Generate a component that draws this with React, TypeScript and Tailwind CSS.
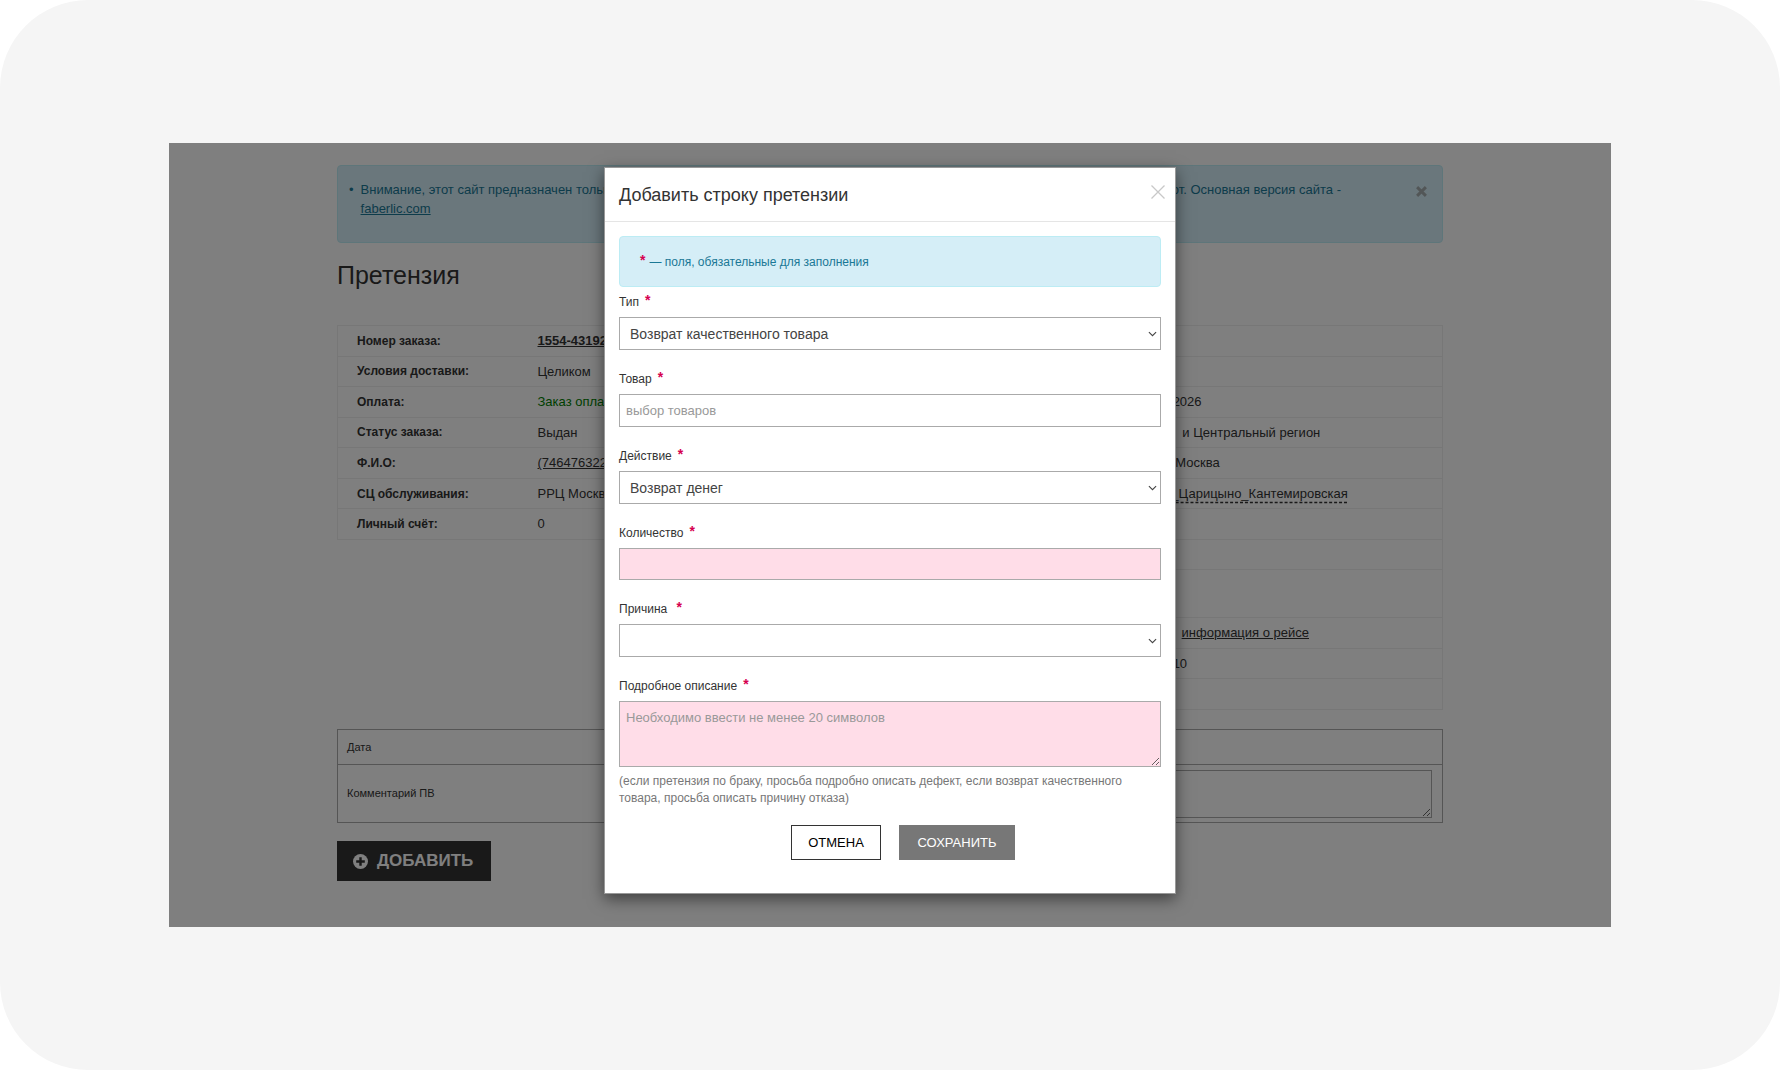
import React, { useState } from 'react';

interface InfoRow {
  label: string;
  value: React.ReactNode;
  tall?: boolean;
}

const ORDER_INFO: InfoRow[] = [
  { label: 'Номер заказа:', value: <a href="#order" className="font-bold underline">1554-43192</a> },
  { label: 'Условия доставки:', value: 'Целиком' },
  { label: 'Оплата:', value: <span className="text-[#008000]">Заказ оплачен</span> },
  { label: 'Статус заказа:', value: 'Выдан' },
  { label: 'Ф.И.О:', value: <a href="#client" className="underline">(746476322)</a> },
  { label: 'СЦ обслуживания:', value: 'РРЦ Москва' },
  { label: 'Личный счёт:', value: '0' },
];

const DELIVERY_INFO: InfoRow[] = [
  { label: '', value: '' },
  { label: '', value: '' },
  { label: '', value: '18.01.2026' },
  {
    label: '',
    value: (
      <span className="flex gap-2">
        <span>Север</span>
        <span>и Центральный регион</span>
      </span>
    ),
  },
  { label: '', value: 'Город Москва' },
  {
    label: '',
    value: (
      <a href="#point" className="underline decoration-dashed underline-offset-4">
        Пункт_Царицыно_Кантемировская
      </a>
    ),
  },
  { label: '', value: '' },
  { label: '', value: '' },
  { label: '', value: '', tall: true },
  {
    label: '',
    value: (
      <span className="flex gap-4">
        <span>Рейс</span>
        <a href="#trip" className="underline">информация о рейсе</a>
      </span>
    ),
  },
  { label: '', value: '18:00:10' },
  { label: '', value: '' },
];

const InfoTable: React.FC<{ rows: InfoRow[]; className: string }> = ({ rows, className }) => (
  <table className={`border-collapse border border-[#eee] ${className}`}>
    <tbody>
      {rows.map((row, i) => (
        <tr key={i} className={`border-b border-[#eee] ${row.tall ? 'h-[47px]' : 'h-[30px]'}`}>
          <th scope="row" className="w-[200px] pl-[19px] text-left text-xs font-bold">{row.label}</th>
          <td className="whitespace-nowrap text-[13px]">{row.value}</td>
        </tr>
      ))}
    </tbody>
  </table>
);

const Star = () => <span className="pb-1 text-sm font-bold text-[#d6004f]">*</span>;

interface FieldProps {
  id: string;
  label: string;
  children: React.ReactNode;
}

const Field: React.FC<FieldProps> = ({ id, label, children }) => (
  <div className="flex flex-col">
    <label htmlFor={id} className="flex h-[30px] items-center gap-[6px] text-xs text-[#333]">
      {label} <Star />
    </label>
    {children}
  </div>
);

interface SelectFieldProps {
  id: string;
  label: string;
  options: string[];
}

const SelectField: React.FC<SelectFieldProps> = ({ id, label, options }) => (
  <Field id={id} label={label}>
    <div className="relative">
      <select
        id={id}
        className="block h-[33px] w-full appearance-none border border-[#aaa] bg-white pl-[10px] pr-6 text-sm text-[#444] outline-none"
      >
        {options.map((option) => (
          <option key={option}>{option}</option>
        ))}
      </select>
      <svg viewBox="0 0 10 6" className="pointer-events-none absolute right-1 top-[14px] h-[6px] w-[9px]" fill="none" stroke="#444" strokeWidth="1.2">
        <path d="M1 .8 5 4.8 9 .8" />
      </svg>
    </div>
  </Field>
);

const ClaimDialog = () => {
  const [quantity, setQuantity] = useState('');
  const [description, setDescription] = useState('');

  return (
    <div
      role="dialog"
      aria-labelledby="dialog-title"
      className="absolute inset-x-0 top-6 mx-auto w-[572px] border border-[#999] bg-white shadow-[0_5px_15px_rgba(0,0,0,0.5)]"
    >
      <div className="flex h-[54px] items-center justify-between border-b border-[#e5e5e5] pl-[14px] pr-[10px]">
        <h2 id="dialog-title" className="text-lg text-[#333]">Добавить строку претензии</h2>
        <button type="button" aria-label="Закрыть" className="pb-[6px]">
          <svg viewBox="0 0 14 14" className="h-[14px] w-[14px]" stroke="#c8c8c8" strokeWidth="1.3">
            <path d="M.5.5l13 13M13.5.5l-13 13" />
          </svg>
        </button>
      </div>

      <form className="flex flex-col px-[14px] pb-[33px] pt-[14px]">
        <p className="flex h-[51px] items-center gap-1 rounded border border-[#bcecf4] bg-[#d5eef7] pl-5 text-xs text-[#1a7896]">
          <Star /> — поля, обязательные для заполнения
        </p>
        <div className="flex flex-col gap-[14px]">
          <SelectField id="type" label="Тип" options={['Возврат качественного товара', 'Возврат брака']} />
          <Field id="product" label="Товар">
            <input id="product" type="text" placeholder="выбор товаров" className="h-[33px] border border-[#aaa] px-[6px] text-[13px] outline-none placeholder:text-[#999]" />
          </Field>
          <SelectField id="action" label="Действие" options={['Возврат денег', 'Замена товара']} />
          <Field id="quantity" label="Количество">
            <input
              id="quantity"
              type="text"
              value={quantity}
              onChange={(e) => setQuantity(e.target.value)}
              className="h-8 border border-[#aaa] bg-[#ffdde8] px-[6px] text-[13px] outline-none"
            />
          </Field>
          <SelectField id="reason" label={'Причина\u00a0'} options={['']} />
          <Field id="description" label="Подробное описание">
            <textarea
              id="description"
              value={description}
              onChange={(e) => setDescription(e.target.value)}
              placeholder="Необходимо ввести не менее 20 символов"
              className="block h-[66px] resize border border-[#aaa] bg-[#ffdde8] px-[6px] py-[6px] text-[13px] outline-none placeholder:text-[#999]"
            />
          </Field>
        </div>
        <p className="mt-[6px] text-xs leading-[17px] text-[#777]">
          (если претензия по браку, просьба подробно описать дефект, если возврат качественного товара, просьба описать причину отказа)
        </p>
        <div className="mt-[18px] flex justify-center gap-[18px] pl-[26px]">
          <button type="button" className="h-[35px] w-[90px] border border-[#333] text-[13px] text-black">ОТМЕНА</button>
          <button type="submit" className="h-[35px] w-[116px] bg-[#777] text-[13px] text-white">СОХРАНИТЬ</button>
        </div>
      </form>
    </div>
  );
};

const ClaimPage = () => (
  <div className="mx-auto flex max-w-[1106px] flex-col pb-[46px] pt-[22px] text-[#333]">
    <div className="flex h-[78px] justify-between rounded border border-[#bcecf4] bg-[#d5eef8] pl-[11px] pr-[10px] pt-[14px] text-[13px] leading-[19px] text-[#1a7896]">
      <ul className="flex-1">
        <li className="flex gap-[7px] pr-[75px]">
          <span>•</span>
          <div className="flex-1">
            <p className="flex justify-between">
              <span>Внимание, этот сайт предназначен только</span>
              <span>работ. Основная версия сайта -</span>
            </p>
            <a href="#main" className="underline">faberlic.com</a>
          </div>
        </li>
      </ul>
      <button type="button" aria-label="Закрыть уведомление" className="flex h-[22px] w-4 items-center text-[#a4adae]">
        <svg viewBox="0 0 12 12" className="h-[11px] w-[11px]" stroke="currentColor" strokeWidth="3.2">
          <path d="M1.2 1.2l9.6 9.6M10.8 1.2l-9.6 9.6" />
        </svg>
      </button>
    </div>

    <h1 className="mt-4 h-[66px] text-[25px] leading-8">Претензия</h1>

    <div className="flex items-start justify-between">
      <InfoTable rows={ORDER_INFO} className="h-[215px] w-[545px]" />
      <InfoTable rows={DELIVERY_INFO} className="h-[385px] w-[507px]" />
    </div>

    <table className="mt-[19px] w-full border-collapse border border-[#aaa] text-[11px]">
      <tbody>
        <tr className="h-[35px] border-b border-[#aaa]">
          <th scope="row" className="w-1/2 pl-[9px] text-left font-normal">Дата</th>
          <td />
        </tr>
        <tr className="h-[58px]">
          <th scope="row" className="pl-[9px] text-left font-normal">
            <label htmlFor="comment">Комментарий ПВ</label>
          </th>
          <td className="pr-[10px]">
            <textarea id="comment" className="block h-12 w-full resize border border-[#aaa]" />
          </td>
        </tr>
      </tbody>
    </table>

    <button type="button" className="mt-[18px] flex h-10 items-center gap-[9px] self-start bg-[#333] pl-4 pr-[18px] text-[17px] font-bold text-white">
      <svg viewBox="0 0 16 16" className="h-[15px] w-[15px]">
        <circle cx="8" cy="8" r="8" fill="#fff" />
        <path d="M8 3.4v9.2M3.4 8h9.2" stroke="#333" strokeWidth="2.6" />
      </svg>
      ДОБАВИТЬ
    </button>
  </div>
);

export default function App() {
  return (
    <div className="bg-white font-['Liberation_Sans',Arial,sans-serif]">
      <div className="rounded-[88px] bg-[#f5f5f5] px-[169px] py-[143px]">
        <main className="relative bg-white">
          <ClaimPage />
          <div className="absolute inset-0 bg-black/50" />
          <ClaimDialog />
        </main>
      </div>
    </div>
  );
}
